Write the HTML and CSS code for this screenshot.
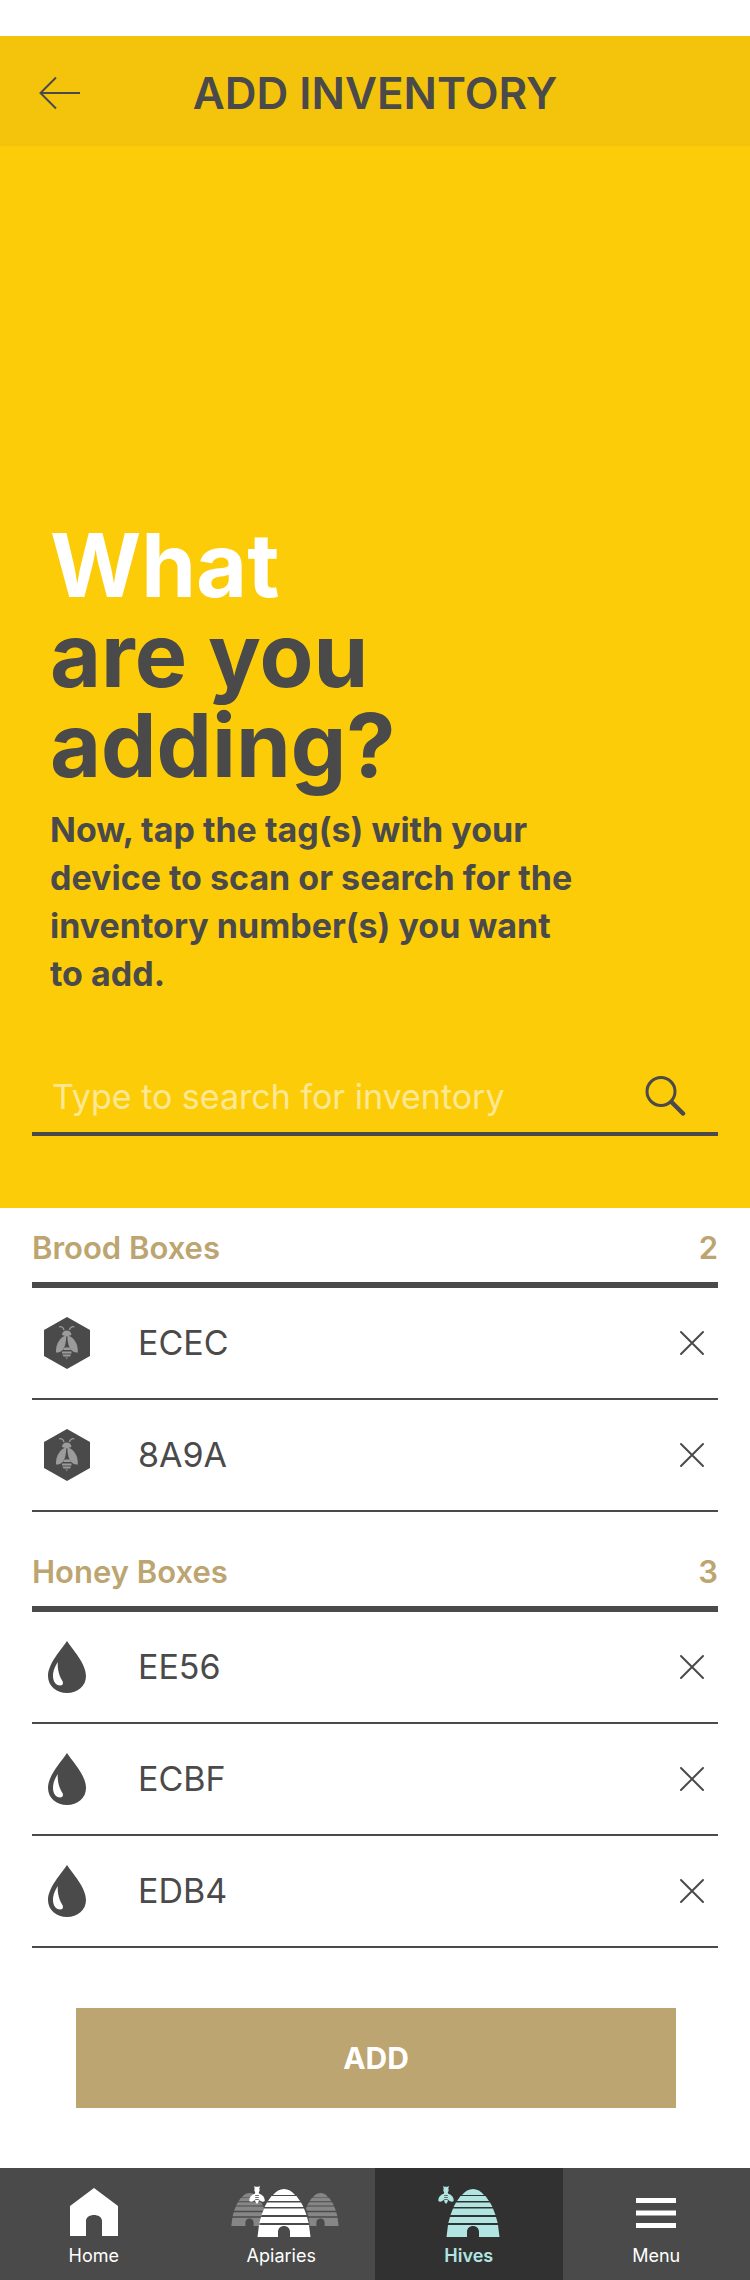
FILE: index.html
```html
<!DOCTYPE html>
<html lang="en">
<head>
<meta charset="utf-8">
<meta name="viewport" content="width=device-width, initial-scale=1">
<title>Add Inventory</title>
<link rel="stylesheet" href="styles.css">
</head>
<body>
<svg class="defs" aria-hidden="true">
  <defs>
    <symbol id="close" viewBox="0 0 26 26">
      <path d="M2 2L24 24M24 2L2 24" fill="none" stroke="currentColor" stroke-width="2" stroke-linecap="round"/>
    </symbol>
    <symbol id="drop" viewBox="0 0 46 52">
      <path d="M23 0C28 8 42 22 42 35C42 45 33.500 52 23 52S4 45 4 35C4 22 18 8 23 0Z" fill="#4a4a4a"/>
      <path d="M13.700 21C10 27 9 31 9 35C9 40.500 12 44.500 16 44.500C18.500 44.500 19.500 43 18.700 40.500C17.500 38 13.300 33 13.700 21Z" fill="#fff"/>
    </symbol>
    <symbol id="brood" viewBox="0 0 46 52">
      <path d="M23 0L46 13V39L23 52L0 39V13Z" fill="#4a4a4a"/>
      <g fill="#9b9b9b">
        <path d="M18 18C18 15 20 13.500 22.700 13.500S27.400 15 27.400 18L22.700 19.500Z"/>
        <path d="M22.200 18.500C16 20 11.500 27 12 35.500C17.500 36.500 22.400 31 22.200 18.500Z"/>
        <path d="M23.400 18.500C30 20 34.300 27 33.800 35.500C28.500 36.500 23.200 31 23.400 18.500Z"/>
        <path d="M20.500 30.500H25.500L27 33H19ZM18 34.500H27.500V36.500H18ZM18.500 37.500H27L26 39.500H19.500ZM21.300 40.500H24L22.700 42Z"/>
      </g>
      <path d="M15 10C17.500 9 19.500 10.500 20 13M30.500 10C28 9 26 10.500 25.500 13" fill="none" stroke="#9b9b9b" stroke-width="1.300"/>
    </symbol>
    <symbol id="skep" viewBox="0 0 54 48">
      <path fill="currentColor" d="M16 6C19 2 23 0 27 0S35 2 38 6ZM14.500 7H39.500L43 12H11ZM10 13.500H44L46.500 18H7.500ZM7 19.500H47L49.500 26H4.500ZM4 28H50L51.700 34H2.300ZM2 36H52L53.500 48H33V43C33 35 21 35 21 43V48H0.500Z"/>
    </symbol>
    <symbol id="bee" viewBox="0 0 16 18">
      <path fill="currentColor" d="M5 0L6.500 0.800H9.500L11 0L10.300 2.500C11 4 10.500 5.500 9.800 6.500L10 7.500C14 9 16 11.500 15.700 15C14 16.300 11.500 15.500 10 13.500L9.500 16L8 18L6.500 16L6 13.500C4.500 15.500 2 16.300 0.300 15C0 11.500 2 9 6 7.500L6.200 6.500C5.500 5.500 5 4 5.700 2.500Z"/>
      <path d="M6.200 9.500H9.800M6.200 11.500H9.800M6.200 13.500H9.800" stroke="#4a4a4a" stroke-width="0.800"/>
    </symbol>
  </defs>
</svg>

<header class="topbar">
  <button class="icon-button back" type="button" aria-label="Back">
    <svg width="42" height="34" viewBox="0 0 42 34"><path d="M18 1.500L2.500 17L18 32.500M2.500 17H42" fill="none" stroke="#4a4a4a" stroke-width="2"/></svg>
  </button>
  <h1 class="title">ADD INVENTORY</h1>
</header>

<main>
  <section class="hero">
    <div class="intro">
      <h2 class="question"><span class="question-lead">What</span><br>are you<br>adding?</h2>
      <p class="hint">Now, tap the tag(s) with your<br>device to scan or search for the<br>inventory number(s) you want<br>to add.</p>
    </div>
    <form class="search">
      <input class="search-input" type="text" aria-label="Search inventory" placeholder="Type to search for inventory">
      <button class="icon-button" type="button" aria-label="Search">
        <svg width="42" height="42" viewBox="0 0 42 42" fill="none" stroke="#4a4a4a"><circle cx="17" cy="16.500" r="14" stroke-width="3"/><path d="M27.500 27L39 38.500" stroke-width="4.500" stroke-linecap="round"/></svg>
      </button>
    </form>
  </section>

  <section class="group">
    <div class="group-head"><h3 class="group-title">Brood Boxes</h3><span>2</span></div>
    <ul class="rows">
      <li class="row"><svg class="row-icon"><use href="#brood"/></svg><span class="code">ECEC</span><button class="icon-button" type="button" aria-label="Remove ECEC"><svg class="close"><use href="#close"/></svg></button></li>
      <li class="row"><svg class="row-icon"><use href="#brood"/></svg><span class="code">8A9A</span><button class="icon-button" type="button" aria-label="Remove 8A9A"><svg class="close"><use href="#close"/></svg></button></li>
    </ul>
  </section>

  <section class="group">
    <div class="group-head"><h3 class="group-title">Honey Boxes</h3><span>3</span></div>
    <ul class="rows">
      <li class="row"><svg class="row-icon"><use href="#drop"/></svg><span class="code">EE56</span><button class="icon-button" type="button" aria-label="Remove EE56"><svg class="close"><use href="#close"/></svg></button></li>
      <li class="row"><svg class="row-icon"><use href="#drop"/></svg><span class="code">ECBF</span><button class="icon-button" type="button" aria-label="Remove ECBF"><svg class="close"><use href="#close"/></svg></button></li>
      <li class="row"><svg class="row-icon"><use href="#drop"/></svg><span class="code">EDB4</span><button class="icon-button" type="button" aria-label="Remove EDB4"><svg class="close"><use href="#close"/></svg></button></li>
    </ul>
  </section>

  <div class="actions"><button class="add" type="button">ADD</button></div>
</main>

<nav class="tabs">
  <a class="tab" href="#home">
    <svg width="48" height="52" viewBox="0 0 48 52"><path d="M24 2L48 20V50H32V35C32 27 16 27 16 35V50H0V20Z" fill="#fff"/></svg>
    Home
  </a>
  <a class="tab" href="#apiaries">
    <svg width="116" height="52" viewBox="0 0 116 52">
      <g color="#868686"><use href="#skep" x="8" y="7" width="37" height="33"/><use href="#skep" x="79" y="7" width="37" height="33"/></g>
      <path d="M35 51L38 34C42 12 50 3 61.500 3S82 12 86 34L88 51Z" fill="#4a4a4a"/>
      <g color="#fff"><use href="#skep" x="34" y="3" width="54" height="48"/><use href="#bee" x="26" y="0" width="16" height="18"/></g>
    </svg>
    Apiaries
  </a>
  <a class="tab tab-active" href="#hives" aria-current="page">
    <svg width="62" height="52" viewBox="0 0 62 52"><use href="#skep" x="8" y="3" width="54" height="48"/><use href="#bee" x="0" y="0" width="16" height="18"/></svg>
    Hives
  </a>
  <a class="tab" href="#menu">
    <svg width="40" height="52" viewBox="0 0 40 52"><path d="M0 12H40V17H0ZM0 24.500H40V29.500H0ZM0 37H40V42H0Z" fill="#fff"/></svg>
    Menu
  </a>
</nav>
</body>
</html>
```

FILE: styles.css
```css
* {
  box-sizing: border-box;
}

body {
  margin: 0;
  padding-top: 36px;
  background: #fff;
  color: #4a4a4a;
  font-family: Inter, "Liberation Sans", sans-serif;
  font-size: 34px;
  line-height: 40px;
}

h1, h2, h3, p, ul {
  margin: 0;
  padding: 0;
}

.defs {
  position: absolute;
  width: 0;
  height: 0;
}

.icon-button {
  display: flex;
  padding: 0;
  border: 0;
  background: none;
  color: inherit;
}

.topbar {
  display: grid;
  grid-template-columns: 42px 1fr 42px;
  align-items: center;
  padding: 32px 38px 28px;
  background: #f4c40c;
}

.title {
  font-size: 44px;
  font-weight: 600;
  line-height: 50px;
  text-align: center;
  white-space: nowrap;
}

.hero {
  padding: 374px 32px 72px;
  background: #fdcc09;
}

.intro {
  padding: 0 18px;
}

.question {
  font-size: 88px;
  font-weight: 700;
  line-height: 90px;
}

.question-lead {
  color: #fff;
}

.hint {
  margin-top: 16px;
  font-size: 34px;
  font-weight: 700;
  line-height: 48px;
}

.search {
  display: flex;
  align-items: center;
  margin-top: 62px;
  padding: 12px 32px 12px 20px;
  border-bottom: 4px solid #4a4a4a;
}

.search-input {
  flex: 1;
  min-width: 0;
  height: 48px;
  padding: 0;
  border: 0;
  outline: 0;
  background: none;
  color: #4a4a4a;
  font: inherit;
}

.search-input::placeholder {
  color: #fee893;
  opacity: 1;
}

.group {
  padding: 0 32px;
}

.group + .group {
  padding-top: 20px;
}

.group-head {
  display: flex;
  justify-content: space-between;
  padding: 20px 0 14px;
  border-bottom: 6px solid #4a4a4a;
  color: #bca570;
  font-size: 31px;
  font-weight: 600;
}

.group-title {
  font-size: 31px;
  font-weight: 600;
}

.rows {
  list-style: none;
}

.row {
  display: flex;
  align-items: center;
  height: 112px;
  padding: 0 13px 0 12px;
  border-bottom: 2px solid #4a4a4a;
}

.row-icon {
  width: 46px;
  height: 52px;
}

.code {
  flex: 1;
  padding-left: 48px;
}

.close {
  width: 26px;
  height: 26px;
}

.actions {
  padding: 60px 74px 60px 76px;
}

.add {
  display: block;
  width: 100%;
  height: 100px;
  border: 0;
  background: #bca570;
  color: #fff;
  font: inherit;
  font-size: 30px;
  font-weight: 700;
}

.tabs {
  display: grid;
  grid-template-columns: repeat(4, 1fr);
  background: #4a4a4a;
}

.tab {
  display: flex;
  flex-direction: column;
  align-items: center;
  gap: 6px;
  padding: 18px 0 12px;
  color: #fff;
  font-size: 18px;
  line-height: 24px;
  text-decoration: none;
}

.tab-active {
  background: #313131;
  color: #b1e5e2;
  font-weight: 600;
}
```
